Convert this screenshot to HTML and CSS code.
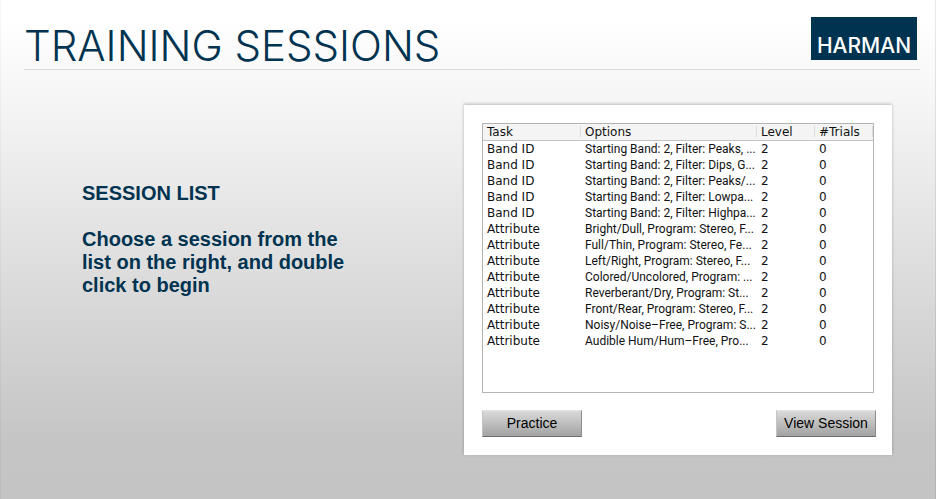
FILE: index.html
```html
<!DOCTYPE html>
<html lang="en">
<head>
    <meta charset="UTF-8">
    <meta name="viewport" content="width=device-width, initial-scale=1.0">
    <title>Training Sessions</title>
    <link rel="stylesheet" href="styles.css">
</head>
<body>
    <!-- Header -->
    <header class="header">
        <h1>TRAINING SESSIONS</h1>
        <div class="logo">HARMAN</div>
    </header>

    <main class="content">
        <!-- Instructions -->
        <section class="intro">
            <h2>SESSION LIST</h2>
            <p>Choose a session from the list on the right, and double click to begin</p>
        </section>

        <!-- Session Panel -->
        <section class="panel">
            <div class="session-list">
                <table>
                    <colgroup>
                        <col class="col-task">
                        <col class="col-options">
                        <col class="col-level">
                        <col class="col-trials">
                    </colgroup>
                    <thead>
                        <tr>
                            <th>Task</th>
                            <th>Options</th>
                            <th>Level</th>
                            <th>#Trials</th>
                        </tr>
                    </thead>
                    <tbody>
                        <tr><td>Band ID</td><td class="options">Starting Band: 2, Filter: Peaks, ...</td><td>2</td><td>0</td></tr>
                        <tr><td>Band ID</td><td class="options">Starting Band: 2, Filter: Dips, G...</td><td>2</td><td>0</td></tr>
                        <tr><td>Band ID</td><td class="options">Starting Band: 2, Filter: Peaks/...</td><td>2</td><td>0</td></tr>
                        <tr><td>Band ID</td><td class="options">Starting Band: 2, Filter: Lowpa...</td><td>2</td><td>0</td></tr>
                        <tr><td>Band ID</td><td class="options">Starting Band: 2, Filter: Highpa...</td><td>2</td><td>0</td></tr>
                        <tr><td>Attribute</td><td class="options">Bright/Dull, Program: Stereo, F...</td><td>2</td><td>0</td></tr>
                        <tr><td>Attribute</td><td class="options">Full/Thin, Program: Stereo, Fe...</td><td>2</td><td>0</td></tr>
                        <tr><td>Attribute</td><td class="options">Left/Right, Program: Stereo, F...</td><td>2</td><td>0</td></tr>
                        <tr><td>Attribute</td><td class="options">Colored/Uncolored, Program: ...</td><td>2</td><td>0</td></tr>
                        <tr><td>Attribute</td><td class="options">Reverberant/Dry, Program: St...</td><td>2</td><td>0</td></tr>
                        <tr><td>Attribute</td><td class="options">Front/Rear, Program: Stereo, F...</td><td>2</td><td>0</td></tr>
                        <tr><td>Attribute</td><td class="options">Noisy/Noise–Free, Program: S...</td><td>2</td><td>0</td></tr>
                        <tr><td>Attribute</td><td class="options">Audible Hum/Hum–Free, Pro...</td><td>2</td><td>0</td></tr>
                    </tbody>
                </table>
            </div>
            <div class="actions">
                <button type="button">Practice</button>
                <button type="button">View Session</button>
            </div>
        </section>
    </main>
</body>
</html>
```

FILE: styles.css
```css
/* Base Styles */
* {
    box-sizing: border-box;
}

body {
    margin: 0;
    min-height: 100vh;
    font-family: "Liberation Sans", Arial, sans-serif;
    color: #003350;
    background: linear-gradient(#ffffff 4%, #f4f4f4 22%, #c5c5c5 88%, #c4c4c4);
    border-left: 1px solid rgba(0, 0, 0, 0.03);
    border-right: 1px solid rgba(0, 0, 0, 0.08);
}

/* Header */
.header {
    display: flex;
    justify-content: space-between;
    align-items: flex-end;
    margin: 0 15px 0 23px;
    padding: 17px 3px 9px 0;
    border-bottom: 1px solid #dadada;
}

.header h1 {
    margin: 0;
    font-family: Inter, sans-serif;
    font-weight: 300;
    font-size: 42px;
    line-height: 28px;
}

.logo {
    display: flex;
    justify-content: center;
    align-items: flex-end;
    width: 106px;
    height: 43px;
    background: #003350;
    color: #fff;
    font-family: Inter, sans-serif;
    font-weight: 500;
    font-size: 21px;
    line-height: 28px;
}

/* Content */
.content {
    display: flex;
    justify-content: space-between;
    align-items: flex-start;
    padding: 35px 43px 44px 81px;
}

.intro {
    width: 272px;
    padding-top: 77px;
    font-size: 20px;
    line-height: 23px;
    font-weight: bold;
}

.intro h2 {
    margin: 0 0 23px;
    font-size: 20px;
}

.intro p {
    margin: 0;
}

/* Session Panel */
.panel {
    flex: 0 1 428px;
    padding: 18px;
    background: #fff;
    box-shadow: 0 -1px 3px rgba(0, 0, 0, 0.25);
}

.session-list {
    min-height: 270px;
    border: 1px solid #b4b4b4;
}

.session-list table {
    width: 100%;
    table-layout: fixed;
    border-collapse: separate;
    border-spacing: 0;
    font-family: "DejaVu Sans", sans-serif;
    font-size: 12px;
    line-height: 16px;
    color: #111;
}

.col-task {
    width: 98px;
}

.col-level,
.col-trials {
    width: 58px;
}

.session-list th,
.session-list td {
    height: 16px;
    padding: 0 4px;
    text-align: left;
    font-weight: normal;
    white-space: nowrap;
}

.session-list th {
    background: linear-gradient(#dcdcdc, #dcdcdc) right top 2px / 1px 11px no-repeat #f4f4f4;
    border-bottom: 1px solid #c4c4c4;
}

.session-list .options {
    font-family: Roboto, sans-serif;
}

/* Buttons */
.actions {
    display: flex;
    justify-content: space-between;
    margin-top: 17px;
    margin-right: -2px;
}

.actions button {
    width: 100px;
    height: 27px;
    padding: 0 0 2px;
    border: 1px solid;
    border-color: #e4e4e4 #8c8c8c #6e6e6e #c4c4c4;
    background: linear-gradient(#dadada, #a2a2a2);
    color: #000;
    font-family: inherit;
    font-size: 14px;
    cursor: pointer;
}
```
